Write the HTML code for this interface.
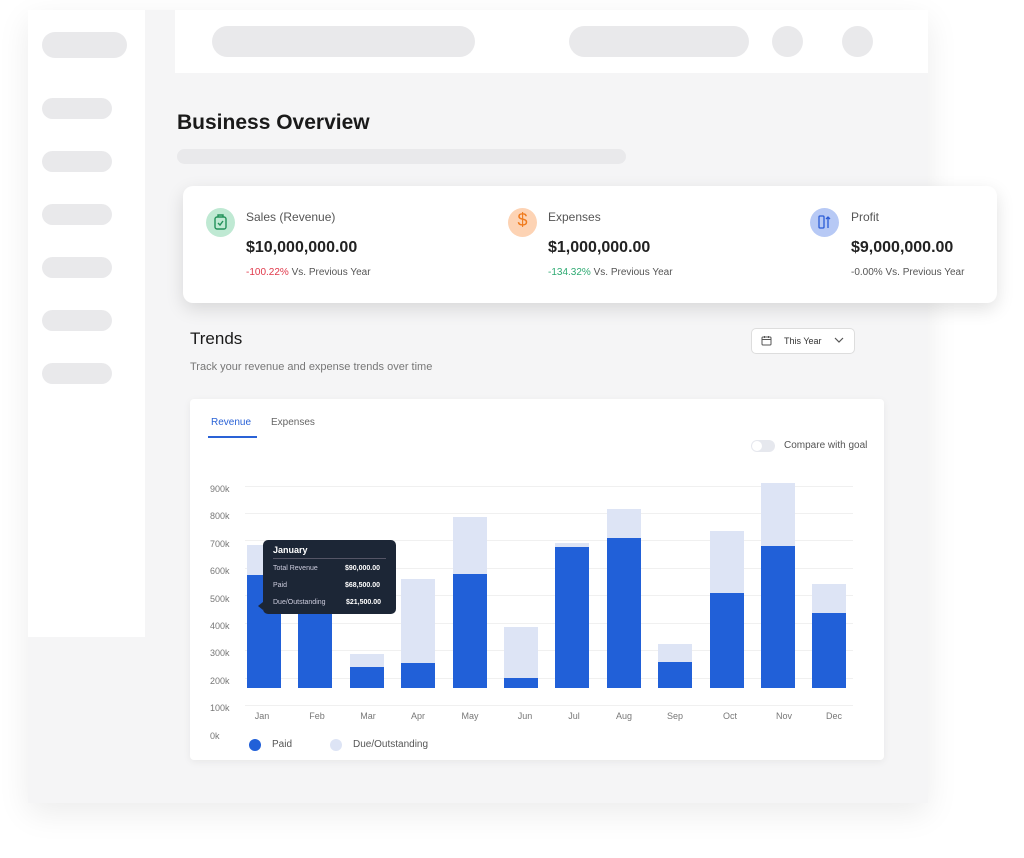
<!DOCTYPE html>
<html><head><style>
*{margin:0;padding:0;box-sizing:border-box}
body{width:1024px;height:858px;background:#fff;font-family:"Liberation Sans",sans-serif;position:relative;overflow:hidden}
.a{position:absolute}
.pill{position:absolute;background:#e9e9eb;border-radius:12px}
.bar{position:absolute;width:34px}
.l{background:#dde4f5}.d{background:#2160d8}
.yl{position:absolute;left:210px;font-size:9px;color:#777}
.xl{position:absolute;top:711px;font-size:9px;color:#777;width:34px;text-align:center}
.g{position:absolute;left:245px;width:608px;height:1px;background:#f0f0f0}
</style></head><body>
<div class="a" style="left:28px;top:10px;width:900px;height:793px;background:#f5f5f6;box-shadow:0 10px 30px rgba(0,0,0,.08)"></div>
<div class="a" style="left:28px;top:10px;width:117px;height:627px;background:#fff"></div>
<div class="pill" style="left:42px;top:32px;width:85px;height:26px;border-radius:13px"></div>
<div class="pill" style="left:42px;top:98px;width:70px;height:21px"></div>
<div class="pill" style="left:42px;top:151px;width:70px;height:21px"></div>
<div class="pill" style="left:42px;top:204px;width:70px;height:21px"></div>
<div class="pill" style="left:42px;top:257px;width:70px;height:21px"></div>
<div class="pill" style="left:42px;top:310px;width:70px;height:21px"></div>
<div class="pill" style="left:42px;top:363px;width:70px;height:21px"></div>
<div class="a" style="left:175px;top:10px;width:753px;height:63px;background:#fff"></div>
<div class="pill" style="left:212px;top:26px;width:263px;height:31px;border-radius:16px"></div>
<div class="pill" style="left:569px;top:26px;width:180px;height:31px;border-radius:16px"></div>
<div class="pill" style="left:772px;top:26px;width:31px;height:31px;border-radius:50%"></div>
<div class="pill" style="left:842px;top:26px;width:31px;height:31px;border-radius:50%"></div>
<div class="a" style="left:177px;top:111px;font-size:21px;font-weight:bold;color:#1a1a1a">Business Overview</div>
<div class="pill" style="left:177px;top:149px;width:449px;height:15px;border-radius:8px"></div>

<div class="a" style="left:183px;top:186px;width:814px;height:117px;background:#fff;border-radius:10px;box-shadow:0 6px 18px rgba(0,0,0,.12)"></div>
<div class="a" style="left:206px;top:208px;width:29px;height:29px;border-radius:50%;background:#bfe9d3"></div>
<svg class="a" style="left:212px;top:213px" width="17" height="18" viewBox="0 0 17 18"><rect x="3" y="4" width="11" height="12" rx="2" fill="none" stroke="#22915a" stroke-width="1.4"/><path d="M6 4V2h5v2M6 10l2 2 3-4" fill="none" stroke="#22915a" stroke-width="1.4"/></svg>
<div class="a" style="left:246px;top:210px;font-size:12px;color:#555">Sales (Revenue)</div>
<div class="a" style="left:246px;top:239px;font-size:16px;font-weight:bold;color:#222">$10,000,000.00</div>
<div class="a" style="left:246px;top:267px;font-size:10px;color:#555"><span style="color:#e0384a">-100.22%</span> Vs. Previous Year</div>
<div class="a" style="left:508px;top:208px;width:29px;height:29px;border-radius:50%;background:#fdd3b4"></div>
<div class="a" style="left:508px;top:210px;width:29px;text-align:center;font-size:18px;color:#f07a1c">$</div>
<div class="a" style="left:548px;top:210px;font-size:12px;color:#555">Expenses</div>
<div class="a" style="left:548px;top:239px;font-size:16px;font-weight:bold;color:#222">$1,000,000.00</div>
<div class="a" style="left:548px;top:267px;font-size:10px;color:#555"><span style="color:#2eaa72">-134.32%</span> Vs. Previous Year</div>
<div class="a" style="left:810px;top:208px;width:29px;height:29px;border-radius:50%;background:#b7c9f5"></div>
<svg class="a" style="left:816px;top:213px" width="17" height="18" viewBox="0 0 17 18"><rect x="3" y="3" width="5" height="12" rx="1" fill="none" stroke="#2a5bd6" stroke-width="1.3"/><path d="M12 15V4M10 6l2-2 2 2" fill="none" stroke="#2a5bd6" stroke-width="1.3"/></svg>
<div class="a" style="left:851px;top:210px;font-size:12px;color:#555">Profit</div>
<div class="a" style="left:851px;top:239px;font-size:16px;font-weight:bold;color:#222">$9,000,000.00</div>
<div class="a" style="left:851px;top:267px;font-size:10px;color:#555">-0.00% Vs. Previous Year</div>

<div class="a" style="left:190px;top:329px;font-size:17px;color:#1a1a1a">Trends</div>
<div class="a" style="left:190px;top:361px;font-size:11px;color:#777">Track your revenue and expense trends over time</div>
<div class="a" style="left:751px;top:328px;width:104px;height:26px;background:#fff;border:1px solid #ddd;border-radius:5px"></div>
<svg class="a" style="left:761px;top:335px" width="11" height="11" viewBox="0 0 11 11"><rect x="1" y="2" width="9" height="8" rx="1" fill="none" stroke="#555"/><path d="M1 4.5h9M3.5 1v2M7.5 1v2" stroke="#555"/></svg>
<div class="a" style="left:784px;top:336px;font-size:9px;color:#333">This Year</div>
<svg class="a" style="left:834px;top:337px" width="10" height="7"><path d="M1 1l4 4 4-4" fill="none" stroke="#555" stroke-width="1.2"/></svg>

<div class="a" style="left:190px;top:399px;width:694px;height:361px;background:#fff;border-radius:4px;box-shadow:0 2px 8px rgba(0,0,0,.06)"></div>
<div class="a" style="left:211px;top:417px;font-size:10px;color:#2a62d6">Revenue</div>
<div class="a" style="left:208px;top:436px;width:49px;height:2px;background:#2a62d6"></div>
<div class="a" style="left:271px;top:417px;font-size:10px;color:#666">Expenses</div>
<div class="a" style="left:751px;top:440px;width:24px;height:12px;border-radius:6px;background:#e6e8ee"></div>
<div class="a" style="left:752px;top:441px;width:10px;height:10px;border-radius:50%;background:#fff"></div>
<div class="a" style="left:784px;top:440px;font-size:10px;color:#555">Compare with goal</div>

<div class="g" style="top:486px"></div><div class="g" style="top:513px"></div><div class="g" style="top:540px"></div><div class="g" style="top:568px"></div><div class="g" style="top:595px"></div><div class="g" style="top:623px"></div><div class="g" style="top:650px"></div><div class="g" style="top:678px"></div><div class="g" style="top:705px"></div>
<div class="yl" style="top:484px">900k</div><div class="yl" style="top:511px">800k</div><div class="yl" style="top:539px">700k</div><div class="yl" style="top:566px">600k</div><div class="yl" style="top:594px">500k</div><div class="yl" style="top:621px">400k</div><div class="yl" style="top:648px">300k</div><div class="yl" style="top:676px">200k</div><div class="yl" style="top:703px">100k</div><div class="yl" style="top:731px">0k</div>

<div class="bar l" style="left:247px;top:545px;height:143px"></div><div class="bar d" style="left:247px;top:575px;height:113px"></div>
<div class="bar d" style="left:298px;top:575px;height:113px"></div>
<div class="bar l" style="left:350px;top:654px;height:34px"></div><div class="bar d" style="left:350px;top:667px;height:21px"></div>
<div class="bar l" style="left:401px;top:579px;height:109px"></div><div class="bar d" style="left:401px;top:663px;height:25px"></div>
<div class="bar l" style="left:453px;top:517px;height:171px"></div><div class="bar d" style="left:453px;top:574px;height:114px"></div>
<div class="bar l" style="left:504px;top:627px;height:61px"></div><div class="bar d" style="left:504px;top:678px;height:10px"></div>
<div class="bar l" style="left:555px;top:543px;height:145px"></div><div class="bar d" style="left:555px;top:547px;height:141px"></div>
<div class="bar l" style="left:607px;top:509px;height:179px"></div><div class="bar d" style="left:607px;top:538px;height:150px"></div>
<div class="bar l" style="left:658px;top:644px;height:44px"></div><div class="bar d" style="left:658px;top:662px;height:26px"></div>
<div class="bar l" style="left:710px;top:531px;height:157px"></div><div class="bar d" style="left:710px;top:593px;height:95px"></div>
<div class="bar l" style="left:761px;top:483px;height:205px"></div><div class="bar d" style="left:761px;top:546px;height:142px"></div>
<div class="bar l" style="left:812px;top:584px;height:104px"></div><div class="bar d" style="left:812px;top:613px;height:75px"></div>

<div class="xl" style="left:245px">Jan</div><div class="xl" style="left:300px">Feb</div><div class="xl" style="left:351px">Mar</div><div class="xl" style="left:401px">Apr</div><div class="xl" style="left:453px">May</div><div class="xl" style="left:508px">Jun</div><div class="xl" style="left:557px">Jul</div><div class="xl" style="left:607px">Aug</div><div class="xl" style="left:658px">Sep</div><div class="xl" style="left:713px">Oct</div><div class="xl" style="left:767px">Nov</div><div class="xl" style="left:817px">Dec</div>

<div class="a" style="left:263px;top:540px;width:133px;height:74px;background:#1c2636;border-radius:5px;color:#fff"></div>
<div class="a" style="left:258px;top:602px;width:0;height:0;border-top:4px solid transparent;border-bottom:4px solid transparent;border-right:5px solid #1c2636"></div>
<div class="a" style="left:273px;top:545px;font-size:9px;font-weight:bold;color:#fff">January</div>
<div class="a" style="left:273px;top:558px;width:113px;height:1px;background:#556"></div>
<div class="a" style="left:273px;top:565px;font-size:7px;color:#ccd">Total Revenue</div><div class="a" style="left:345px;top:565px;font-size:7px;font-weight:bold;color:#fff">$90,000.00</div>
<div class="a" style="left:273px;top:582px;font-size:7px;color:#ccd">Paid</div><div class="a" style="left:345px;top:582px;font-size:7px;font-weight:bold;color:#fff">$68,500.00</div>
<div class="a" style="left:273px;top:599px;font-size:7px;color:#ccd">Due/Outstanding</div><div class="a" style="left:346px;top:599px;font-size:7px;font-weight:bold;color:#fff">$21,500.00</div>

<div class="a" style="left:249px;top:739px;width:12px;height:12px;border-radius:50%;background:#2160d8"></div>
<div class="a" style="left:272px;top:739px;font-size:10px;color:#555">Paid</div>
<div class="a" style="left:330px;top:739px;width:12px;height:12px;border-radius:50%;background:#dde4f5"></div>
<div class="a" style="left:353px;top:739px;font-size:10px;color:#555">Due/Outstanding</div>
</body></html>
